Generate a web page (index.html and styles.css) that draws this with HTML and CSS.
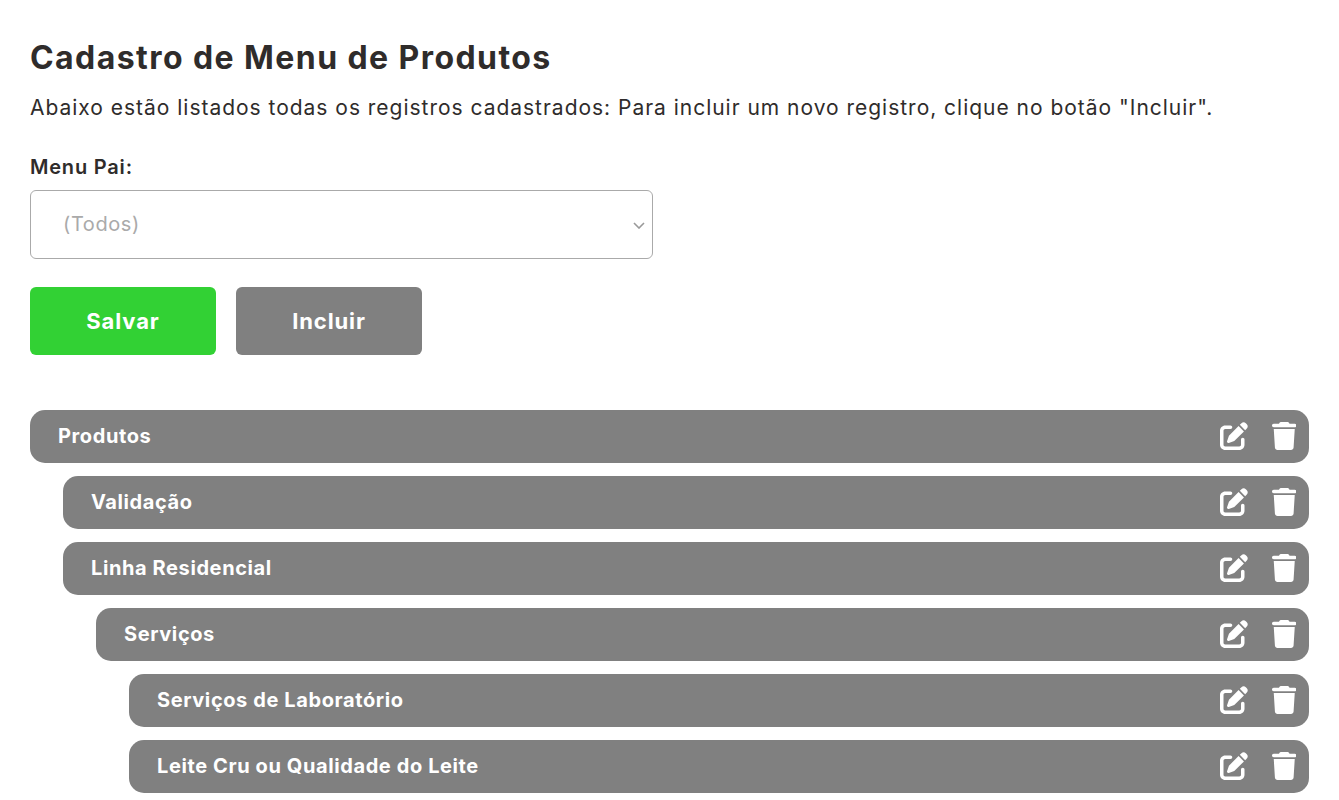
FILE: index.html
```html
<!DOCTYPE html>
<html lang="pt-BR">
<head>
  <meta charset="UTF-8" />
  <title>Cadastro de Menu de Produtos</title>
  <link rel="stylesheet" href="styles.css">
</head>
<body>
  <svg class="sprite" width="0" height="0">
    <symbol id="icon-edit" viewBox="0 0 512 512">
      <path d="M471.6 21.7c-21.9-21.9-57.3-21.9-79.2 0L362.3 51.7l97.9 97.9 30.1-30.1c21.9-21.9 21.9-57.3 0-79.2L471.6 21.7zm-299.2 220c-6.1 6.1-10.8 13.6-13.5 21.9l-29.6 88.8c-2.9 8.6-.6 18.1 5.8 24.6s15.9 8.7 24.6 5.8l88.8-29.6c8.2-2.7 15.7-7.4 21.9-13.5L437.7 172.3 339.7 74.3 172.4 241.7zM96 64C43 64 0 107 0 160V416c0 53 43 96 96 96H352c53 0 96-43 96-96V320c0-17.7-14.3-32-32-32s-32 14.3-32 32v96c0 17.7-14.3 32-32 32H96c-17.7 0-32-14.3-32-32V160c0-17.7 14.3-32 32-32h96c17.7 0 32-14.3 32-32s-14.3-32-32-32H96z"/>
    </symbol>
    <symbol id="icon-trash" viewBox="0 0 448 512">
      <path d="M135.2 17.7L128 32H32C14.3 32 0 46.3 0 64S14.3 96 32 96H416c17.7 0 32-14.3 32-32s-14.3-32-32-32H320l-7.2-14.3C307.4 6.8 296.3 0 284.2 0H163.8c-12.1 0-23.2 6.8-28.6 17.7zM416 128H32L53.2 467c1.6 25.3 22.6 45 47.9 45H346.9c25.3 0 46.3-19.7 47.9-45L416 128z"/>
    </symbol>
  </svg>

  <h1 class="page-title">Cadastro de Menu de Produtos</h1>
  <p class="page-text">Abaixo estão listados todas os registros cadastrados: Para incluir um novo registro, clique no botão "Incluir".</p>

  <form class="filter-form">
    <label class="field-label" for="menuPai">Menu Pai:</label>
    <div class="select-wrapper">
      <select id="menuPai" class="field-select">
        <option>(Todos)</option>
      </select>
      <svg class="select-arrow" viewBox="0 0 12 7"><path d="M1 1l5 5 5-5"/></svg>
    </div>
    <div class="button-row">
      <button type="button" class="btn btn-save">Salvar</button>
      <button type="button" class="btn btn-add">Incluir</button>
    </div>
  </form>

  <!-- árvore de menus -->
  <ul class="menu-tree">
    <li class="menu-item">
      <span class="menu-name">Produtos</span>
      <a class="menu-action"><svg class="icon-edit"><use href="#icon-edit"/></svg></a>
      <a class="menu-action"><svg class="icon-trash"><use href="#icon-trash"/></svg></a>
    </li>
    <li class="menu-item level-1">
      <span class="menu-name">Validação</span>
      <a class="menu-action"><svg class="icon-edit"><use href="#icon-edit"/></svg></a>
      <a class="menu-action"><svg class="icon-trash"><use href="#icon-trash"/></svg></a>
    </li>
    <li class="menu-item level-1">
      <span class="menu-name">Linha Residencial</span>
      <a class="menu-action"><svg class="icon-edit"><use href="#icon-edit"/></svg></a>
      <a class="menu-action"><svg class="icon-trash"><use href="#icon-trash"/></svg></a>
    </li>
    <li class="menu-item level-2">
      <span class="menu-name">Serviços</span>
      <a class="menu-action"><svg class="icon-edit"><use href="#icon-edit"/></svg></a>
      <a class="menu-action"><svg class="icon-trash"><use href="#icon-trash"/></svg></a>
    </li>
    <li class="menu-item level-3">
      <span class="menu-name">Serviços de Laboratório</span>
      <a class="menu-action"><svg class="icon-edit"><use href="#icon-edit"/></svg></a>
      <a class="menu-action"><svg class="icon-trash"><use href="#icon-trash"/></svg></a>
    </li>
    <li class="menu-item level-3">
      <span class="menu-name">Leite Cru ou Qualidade do Leite</span>
      <a class="menu-action"><svg class="icon-edit"><use href="#icon-edit"/></svg></a>
      <a class="menu-action"><svg class="icon-trash"><use href="#icon-trash"/></svg></a>
    </li>
  </ul>
</body>
</html>
```

FILE: styles.css
```css
* {
  box-sizing: border-box;
}

html {
  overflow: hidden;
}

body {
  font-family: 'Inter', 'Liberation Sans', sans-serif;
  margin: 0;
  padding: 37px 30px 0;
  background-color: white;
  color: #2f2c2b;
  height: 800px;
  overflow: hidden;
}

.sprite {
  position: absolute;
}

.page-title {
  font-size: 32px;
  line-height: 42px;
  font-weight: 700;
  letter-spacing: 1.43px;
  margin: 0;
}

.page-text {
  font-size: 21px;
  line-height: 30px;
  letter-spacing: 0.98px;
  margin: 14px 0 0;
}

.filter-form {
  margin-top: 30px;
}

.field-label {
  display: block;
  font-size: 20px;
  line-height: 28px;
  font-weight: 600;
  letter-spacing: 0.8px;
  margin-bottom: 9px;
}

.select-wrapper {
  position: relative;
  width: 623px;
}

.field-select {
  display: block;
  width: 100%;
  height: 69px;
  padding: 0 32px 2px;
  border: 1px solid #aaaaaa;
  border-radius: 6px;
  background-color: white;
  color: #aaaaaa;
  font-family: inherit;
  font-size: 20px;
  letter-spacing: 0.6px;
  appearance: none;
}

.select-arrow {
  position: absolute;
  top: 32px;
  right: 8px;
  width: 12px;
  height: 7px;
  fill: none;
  stroke: #999999;
  stroke-width: 1.6;
  pointer-events: none;
}

.button-row {
  display: flex;
  gap: 20px;
  margin-top: 28px;
}

.btn {
  width: 186px;
  height: 68px;
  border: none;
  border-radius: 6px;
  color: white;
  font-family: inherit;
  font-size: 22px;
  font-weight: 700;
  letter-spacing: 0.9px;
  cursor: pointer;
}

.btn-save {
  background-color: #32d134;
}

.btn-add {
  background-color: #808080;
}

.menu-tree {
  list-style: none;
  margin: 55px 0 0;
  padding: 0;
  display: flex;
  flex-direction: column;
  gap: 13px;
}

.menu-item {
  display: flex;
  align-items: center;
  height: 53px;
  padding: 0 13px 2px 28px;
  border-radius: 15px;
  background-color: #808080;
  color: white;
}

.level-1 {
  margin-left: 33px;
}

.level-2 {
  margin-left: 66px;
}

.level-3 {
  margin-left: 99px;
}

.menu-name {
  flex: 1;
  font-size: 20px;
  font-weight: 700;
  letter-spacing: 0.6px;
}

.menu-action {
  display: flex;
  cursor: pointer;
}

.icon-edit {
  width: 28px;
  height: 28px;
  fill: white;
  margin-right: 24px;
}

.icon-trash {
  width: 24.5px;
  height: 28px;
  fill: white;
}
```
